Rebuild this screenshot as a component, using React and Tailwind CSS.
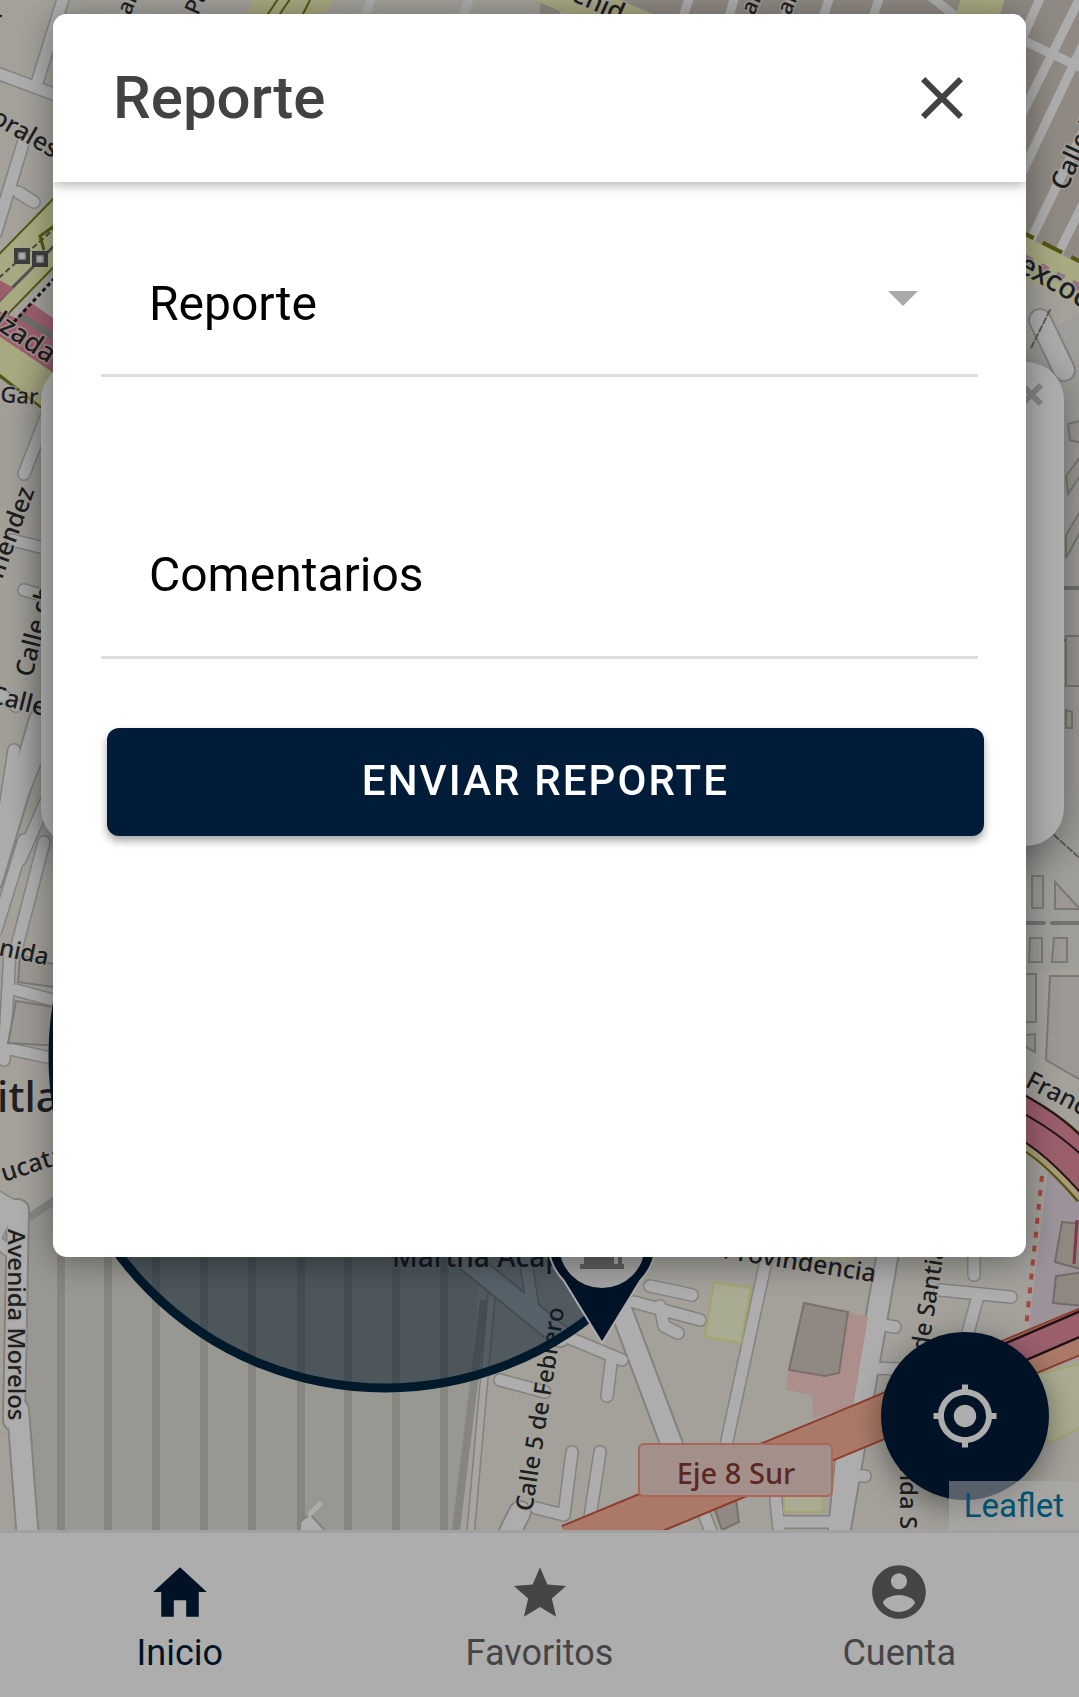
import React from "react";
import { IoMdClose, IoMdContact, IoMdHome, IoMdLocate, IoMdStar } from "react-icons/io";

const stripes = [57, 104, 152, 200, 248, 297, 344, 392, 440];

const streets = [
  // north-west
  "M64 -4L38 80", "M-6 72L64 98", "M24 140L-4 232", "M18 192L34 202",
  // west
  "M48 412L24 474", "M12 540L60 552", "M24 590L60 600", "M-4 690L16 706", "M14 750L-6 880", "M60 700L8 830",
  "M60 770L20 860", "M24 840L-4 930", "M44 842L16 950", "M10 950L4 1060", "M16 990L60 1002", "M-4 1046L60 1060",
  "M-6 1195L20 1210", "M4 1220L-10 1250", "M-6 1240L8 1250",
  // south
  "M767 1256L725 1450", "M567 1337L622 1360", "M612 1356L607 1396",
  "M650 1286L692 1295", "M634 1302L700 1320", "M660 1306L664 1326L678 1333", "M940 1290L1011 1297", "M978 1296L967 1336",
  "M974 1252L974 1275", "M873 1323L895 1327", "M868 1368L898 1369", "M844 1476L865 1476", "M572 1452L564 1515L536 1508",
  "M600 1452L588 1530", "M705 1516L714 1540", "M776 1500L780 1540", "M780 1522L830 1522", "M525 1256L534 1316",
  "M500 1380L545 1392",
];

const wideStreets = [
  "M613 1288L672 1445", "M888 1252L838 1540", "M18 1410L28 1540", "M6 1210L18 1210L14 1420", "M-8 880L40 720",
  "M462 1256L560 1336", "M520 1512L506 1540", "M846 1460L838 1540", "M1040 320L1064 370",
];

const blocks = [
  "M1068 424L1084 420V444L1070 440Z", "M1066 476L1084 452V470L1068 494Z", "M1066 535L1084 505V525L1066 558Z",
  "M1066 636H1084V686H1066Z", "M1066 710L1072 712V728H1066Z", "M1032 876H1043V908H1032Z", "M1055 882L1080 909H1055Z",
  "M1030 938H1042V962H1029Z", "M1054 938H1067V962H1052Z", "M1020 974H1036V1022H1020Z", "M1050 976H1084V1082L1046 1060Z",
  "M1020 1036L1035 1034V1052L1020 1044Z", "M16 1001L60 1008V1046L8 1043Z", "M20 955L60 966V988L18 982Z",
];

function MapLabel({ x, y, turn = 0, size = 24, children }) {
  return (
    <text
      x={x}
      y={y}
      fontSize={size}
      fontWeight="500"
      transform={`rotate(${turn} ${x} ${y})`}
      fill="#2e2e2e"
      stroke="#f4f2ec"
      strokeWidth="3"
      strokeOpacity="0.7"
      paintOrder="stroke"
    >
      {children}
    </text>
  );
}

function CityMap() {
  return (
    <svg
      className="absolute inset-0 h-full w-full"
      viewBox="0 0 1079 1530"
      preserveAspectRatio="xMidYMax slice"
      fontFamily='"Noto Sans", sans-serif'
      role="img"
      aria-label="Mapa"
    >
      <rect width="1079" height="1530" fill="#f0ede3" />

      {/* residential blocks in the north-east */}
      <path d="M540 -5H1084V280L1019 250V14H540Z" fill="#d4cbc2" />
      <path d="M1019 350L1084 310V970H1019Z" fill="#ebe8e2" />

      {/* striped yard */}
      <path d="M26 1220L60 1200H486L458 1530H34L26 1400Z" fill="#e1dfd6" />
      <g fill="#c6c4bd">
        {stripes.map((x) => (
          <rect key={x} x={x} y="1200" width="8" height="330" />
        ))}
        <path d="M26 1215L60 1192V1202L26 1224Z" />
        <path d="M480 1300L488 1300L460 1530H452Z" />
      </g>

      <g fill="none" strokeLinecap="round" strokeLinejoin="round">
        <path d="M492 1290L470 1540" stroke="#c0beba" strokeWidth="9" />
        <path d="M492 1290L470 1540" stroke="#f6f5f0" strokeWidth="6" />
        <g stroke="#c2c0bc" strokeWidth="14">
          {streets.map((d) => <path key={d} d={d} />)}
        </g>
        <g stroke="#c2c0bc" strokeWidth="24">
          {wideStreets.map((d) => <path key={d} d={d} />)}
        </g>
        <g stroke="#ffffff" strokeWidth="11">
          {streets.map((d) => <path key={d} d={d} />)}
        </g>
        <g stroke="#ffffff" strokeWidth="20">
          {wideStreets.map((d) => <path key={d} d={d} />)}
        </g>
        <g stroke="#ffffff" strokeWidth="9">
          <path d="M1014 36L1090 72M1008 70L1042 -6M1014 190L1090 30M1018 122L1090 -22M1022 258L1100 96M1052 266L1100 170" />
          <path d="M372 -4L364 20M470 -4L462 20M690 -4L682 20M735 -4L728 20M792 -4L784 20M830 -4L822 20M880 -4L872 20M925 -8L965 24M130 -4L122 20M580 -8L560 20" />
        </g>
        <path d="M300 1536V1522L310 1514L328 1534Z" fill="#ffffff" stroke="#c2c0bc" strokeWidth="2" />
        <path d="M310 1514L320 1504" stroke="#ffffff" strokeWidth="5" />
        <path d="M1019 923H1044M1052 923H1079M1064 588H1079" stroke="#aaa8a4" strokeWidth="4" />
        <path d="M1050 310L1030 350M1060 636L1084 660M1054 835L1084 862" stroke="#8b8984" strokeWidth="2" strokeDasharray="6 3" />
      </g>

      <g fill="#e6e2da" stroke="#b6b3ac" strokeWidth="2">
        {blocks.map((d) => <path key={d} d={d} />)}
      </g>

      {/* avenues in the north */}
      <g fill="none">
        <path d="M-12 300L72 214" stroke="#7e7f1d" strokeWidth="50" />
        <path d="M-12 300L72 214" stroke="#f7fabf" strokeWidth="46" />
        <path d="M-8 284L64 220" stroke="#666" strokeWidth="2" strokeDasharray="6 3" />
        <path d="M44 250L40 236L60 222" stroke="#7e7f1d" strokeWidth="3" />
        <path d="M-12 312L64 236" stroke="#777" strokeWidth="3" />
        <path d="M-8 352L64 406" stroke="#7e7f1d" strokeWidth="32" />
        <path d="M-8 346L64 402" stroke="#f7fabf" strokeWidth="34" />
        <path d="M-12 274L14 288L-4 304Z" fill="#e58ca0" />
        <path d="M30 302L64 326V380L-4 334V310L16 318Z" fill="#e58ca0" />
        <path d="M20 316L64 342" stroke="#a3a3a3" strokeWidth="7" />
        <path d="M14 322L64 268" stroke="#222" strokeWidth="3" strokeDasharray="4 3" />
        <path d="M255 -4H336L322 20H243Z" fill="#f7fabf" />
        <path d="M280 -4L264 20M292 -4L276 20M312 -4L300 20" stroke="#7e7f1d" strokeWidth="2" />
        <path d="M540 -16L670 40" stroke="#f7fabf" strokeWidth="34" />
        <path d="M962 -4H1006L998 20H954Z" fill="#f7fabf" />
        <path d="M1006 244L1096 290" stroke="#7e7f1d" strokeWidth="40" strokeDasharray="22 10" />
        <path d="M1006 248L1096 293" stroke="#f7fabf" strokeWidth="38" />
        <path d="M1024 258L1084 290" stroke="#dba5c4" strokeWidth="8" strokeDasharray="9 9" />
      </g>
      <g fill="#b9b9b9" stroke="#5c5c5c" strokeWidth="4">
        <rect x="16" y="250" width="12" height="12" />
        <rect x="34" y="253" width="12" height="12" />
      </g>
      <g fill="#ffffff">
        <circle cx="22" cy="256" r="3" />
        <circle cx="40" cy="259" r="3" />
      </g>

      {/* motorway and the zone east of it */}
      <path d="M1048 1170L1084 1190V1320L1028 1335Z" fill="#e6d9e4" />
      <g fill="#d2c9bf" stroke="#a99e98" strokeWidth="2">
        <path d="M1062 1222L1084 1224V1270L1055 1262Z" />
        <path d="M1056 1276L1084 1272V1306L1053 1303Z" />
      </g>
      <path d="M1077 1220L1074 1264" stroke="#c0506c" strokeWidth="3" />
      <path d="M1042 1176L1026 1328" stroke="#f0685c" strokeWidth="4" strokeDasharray="6 8" />
      <g fill="none">
        <path d="M1006 1112C1040 1130 1060 1144 1096 1186" stroke="#7e7f1d" strokeWidth="50" />
        <path d="M1006 1112C1040 1130 1060 1144 1096 1185" stroke="#f7e4b0" strokeWidth="46" />
        <path d="M1006 1108C1040 1126 1060 1140 1096 1180" stroke="#331c22" strokeWidth="42" />
        <path d="M1006 1108C1040 1126 1060 1140 1096 1180" stroke="#e58ca0" strokeWidth="38" />
        <path d="M1006 1104C1040 1122 1060 1134 1096 1168" stroke="#331c22" strokeWidth="2" />
      </g>

      {/* parks and buildings in the south */}
      <g strokeWidth="2">
        <path d="M714 1282L751 1288L741 1343L705 1337Z" fill="#fafcd7" stroke="#f2f2a0" />
        <path d="M784 1490H822V1512H784Z" fill="#fafcd7" stroke="#f2f2a0" />
        <path d="M1035 1375L1084 1363V1426L1048 1443Z" fill="#fafcd7" stroke="#f2f2a0" />
        <path d="M804 1256H856L850 1262H804Z" fill="#fafcd7" />
        <path d="M848 1312L868 1317L853 1407L813 1418L812 1395L786 1390L789 1370Z" fill="#fed2cc" />
        <path d="M804 1303L848 1312L839 1373L825 1376L789 1370Z" fill="#d4cbc2" stroke="#b4a49b" />
        <path d="M714 1507L736 1500L739 1522L722 1530Z" fill="#d4cbc2" stroke="#b4a49b" />
      </g>

      {/* Eje 8 Sur */}
      <g fill="none">
        <path d="M570 1546L884 1416L1000 1365L1094 1326" stroke="#cf5a42" strokeWidth="45" />
        <path d="M570 1546L884 1416L1000 1365L1094 1326" stroke="#fcb39a" strokeWidth="41" />
        <path d="M950 1380L1094 1318" stroke="#33191f" strokeWidth="26" />
        <path d="M950 1380L1094 1318" stroke="#e58ca0" strokeWidth="21" />
      </g>

      <MapLabel x={-10} y={122} turn={30} size={25}>orales</MapLabel>
      <MapLabel x={-8} y={326} turn={34} size={27}>lzada</MapLabel>
      <MapLabel x={0} y={402} turn={4} size={22}>Gar</MapLabel>
      <MapLabel x={2} y={580} turn={-70} size={25}>méndez</MapLabel>
      <MapLabel x={32} y={678} turn={-76} size={25}>Calle ch</MapLabel>
      <MapLabel x={-12} y={702} turn={14} size={25}>Calle</MapLabel>
      <MapLabel x={-2} y={955} turn={12} size={24}>nida</MapLabel>
      <MapLabel x={-19} y={1112} size={42}>titla</MapLabel>
      <MapLabel x={4} y={1182} turn={-18} size={25}>ucatán</MapLabel>
      <MapLabel x={8} y={1229} turn={90} size={24}>Avenida Morelos</MapLabel>
      <MapLabel x={392} y={1267} size={28}>Martha Acapulco</MapLabel>
      <MapLabel x={532} y={1512} turn={-81} size={24}>Calle 5 de Febrero</MapLabel>
      <MapLabel x={722} y={1258} turn={9} size={25}>Provindencia</MapLabel>
      <MapLabel x={928} y={1352} turn={-81} size={24}>de Santiago</MapLabel>
      <MapLabel x={900} y={1466} turn={90} size={24}>nda S</MapLabel>
      <MapLabel x={1066} y={192} turn={-65} size={26}>Calle 7</MapLabel>
      <MapLabel x={1016} y={270} turn={30} size={29}>excoco</MapLabel>
      <MapLabel x={1024} y={1086} turn={27} size={25}>Francisco</MapLabel>
      <MapLabel x={570} y={0} turn={24} size={26}>enid</MapLabel>
      <MapLabel x={130} y={16} turn={-66} size={22}>all</MapLabel>
      <MapLabel x={198} y={16} turn={-66} size={22}>Pa</MapLabel>
      <MapLabel x={754} y={16} turn={-66} size={22}>all</MapLabel>
      <MapLabel x={790} y={16} turn={-66} size={22}>all</MapLabel>
      <MapLabel x={-4} y={34} turn={-72} size={24}>M</MapLabel>

      <rect x="639" y="1444" width="193" height="52" rx="5" fill="#f1d5cd" stroke="#fd9684" strokeWidth="2" />
      <text x="736" y="1484" fontSize="29" fontWeight="500" textAnchor="middle" fill="#8a3a35">Eje 8 Sur</text>

      {/* search radius */}
      <circle cx="385" cy="1056" r="332" fill="#002038" fillOpacity="0.5" stroke="#002540" strokeWidth="9" />

      {/* station marker */}
      <path d="M602 1343L564 1281C546 1262 544 1238 556 1216C576 1186 628 1186 648 1216C660 1238 658 1262 640 1281Z" fill="#001c38" stroke="#ffffff" strokeWidth="2" />
      <circle cx="602" cy="1245" r="43" fill="#f0f0f0" />
      <path d="M580 1269V1264H584V1225H614V1264H618V1240H622V1264H624V1269Z" fill="#8c8c8c" />
    </svg>
  );
}

const tabs = [
  { label: "Inicio", Icon: IoMdHome, active: true },
  { label: "Favoritos", Icon: IoMdStar },
  { label: "Cuenta", Icon: IoMdContact },
];

function ReportDialog() {
  return (
    <div className="fixed inset-0 flex bg-black/32 px-[53px] pt-[14px] pb-[440px]">
      <section
        role="dialog"
        aria-labelledby="dialog-title"
        className="flex flex-1 flex-col overflow-hidden rounded-[14px] bg-white shadow-[0_4px_36px_rgba(0,0,0,0.4)]"
      >
        <header className="flex h-[168px] shrink-0 items-center justify-between bg-white pr-12 pl-[60px] shadow-[0_2px_12px_rgba(0,0,0,0.35)]">
          <h1 id="dialog-title" className="text-[60px] leading-[72px] font-medium text-[#424242]">Reporte</h1>
          <button type="button" aria-label="Cerrar" className="text-[72px] text-[#424242]">
            <IoMdClose />
          </button>
        </header>
        <form className="flex flex-col px-12 pt-12" onSubmit={(e) => e.preventDefault()}>
          <div className="relative flex items-center border-b-[3px] border-[#dedede]">
            <select aria-label="Reporte" className="h-36 w-full appearance-none bg-transparent pt-1 pl-12 text-[48px] text-black outline-none">
              <option>Reporte</option>
            </select>
            <svg viewBox="0 0 30 15" className="pointer-events-none absolute right-[60px] mb-2 h-[15px] w-[30px]" aria-hidden="true">
              <path d="M0 0H30L15 15Z" fill="#a9a9a9" />
            </svg>
          </div>
          <input
            type="text"
            aria-label="Comentarios"
            placeholder="Comentarios"
            className="mt-28 h-[170px] w-full border-b-[3px] border-[#dedede] pt-1 pl-12 text-[48px] text-black outline-none placeholder:text-black placeholder:opacity-100"
          />
          <button
            type="submit"
            className="mt-[69px] -mr-1.5 ml-1.5 h-[108px] rounded-xl bg-[#001c38] pb-1 text-[42px] font-medium tracking-wider text-white uppercase shadow-[0_5px_8px_rgba(0,0,0,0.35)]"
          >
            Enviar reporte
          </button>
        </form>
      </section>
    </div>
  );
}

export default function App() {
  return (
    <div className="flex h-screen flex-col bg-white font-['Roboto',sans-serif]">
      <main className="relative flex-1 overflow-hidden">
        <CityMap />
        <div className="absolute top-[362px] right-[15px] left-[41px] h-[484px] rounded-[38px] bg-white shadow-[0_9px_42px_rgba(0,0,0,0.4)]">
          <button type="button" aria-label="Cerrar ventana" className="absolute top-[15px] right-[15px] text-[#c3c3c3]">
            <svg viewBox="0 0 36 36" className="size-9" aria-hidden="true">
              <path d="M9 8L28 27M28 8L9 27" stroke="currentColor" strokeWidth="6" />
            </svg>
          </button>
        </div>
        <button
          type="button"
          aria-label="Mi ubicación"
          className="absolute right-[30px] bottom-[30px] flex size-[168px] items-center justify-center rounded-full bg-[#001c38] text-[72px] text-white shadow-[0_8px_30px_rgba(0,0,0,0.4)]"
        >
          <IoMdLocate />
        </button>
        <a href="#leaflet" className="absolute right-0 bottom-0 bg-white/50 px-[15px] text-[33px] leading-[49px] text-[#0078a8]">
          Leaflet
        </a>
      </main>
      <nav className="flex h-[167px] shrink-0 border-t-[3px] border-[#ededed] bg-white">
        {tabs.map(({ label, Icon, active }) => (
          <button
            key={label}
            type="button"
            className={`flex flex-1 flex-col items-center justify-center gap-1 pt-1.5 text-[36px] leading-[48px] ${active ? "text-[#001c38]" : "text-[#666666]"}`}
          >
            <Icon className="size-[66px]" />
            {label}
          </button>
        ))}
      </nav>
      <ReportDialog />
    </div>
  );
}
